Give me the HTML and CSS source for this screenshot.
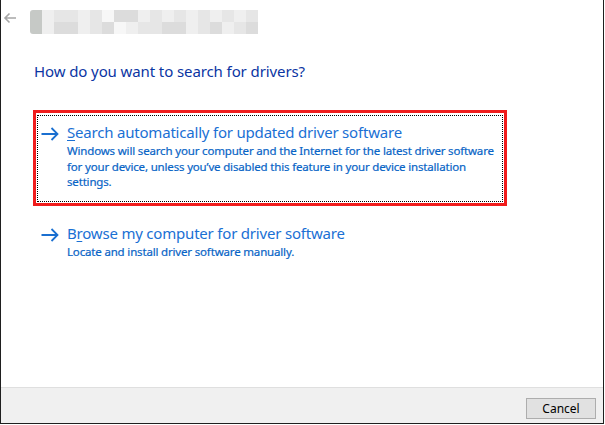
FILE: index.html
```html
<!DOCTYPE html>
<html>
<head>
<meta charset="UTF-8" />
<title>Update Drivers</title>
<link rel="stylesheet" href="styles.css">
</head>
<body>
<div class="wizard">
	<div class="topbar">
		<svg class="back" width="14" height="12" viewBox="0 0 14 12"><path d="M13 6H2M6.5 1.5L2 6l4.5 4.5" fill="none" stroke="#a6a6a6" stroke-width="1.6"/></svg>
		<div class="blur">
			<div class="row">
				<span class="px edge"></span><span class="px c3"></span><span class="px c2"></span><span class="px c2"></span><span class="px c3"></span><span class="px c2"></span><span class="px c4"></span><span class="px c1"></span><span class="px c1"></span><span class="px c3"></span><span class="px c2"></span><span class="px c3"></span><span class="px c2"></span><span class="px c3"></span><span class="px c2"></span><span class="px c3"></span><span class="px c2"></span><span class="px c3"></span><span class="px c2"></span>
			</div>
			<div class="row">
				<span class="px edge"></span><span class="px c3"></span><span class="px c1"></span><span class="px c1"></span><span class="px c3"></span><span class="px c2"></span><span class="px c1"></span><span class="px c4"></span><span class="px c3"></span><span class="px c2"></span><span class="px c2"></span><span class="px c1"></span><span class="px c1"></span><span class="px c3"></span><span class="px c2"></span><span class="px c1"></span><span class="px c3"></span><span class="px c2"></span><span class="px c1"></span>
			</div>
		</div>
	</div>
	<div class="content">
		<h1>How do you want to search for drivers?</h1>
		<div class="option selected">
			<div class="focus">
				<svg class="arrow" width="18" height="14" viewBox="0 0 18 14"><path d="M0.5 7H16.5M10.5 1L16.5 7L10.5 13" fill="none" stroke="#1a6fd0" stroke-width="1.8"/></svg>
				<div class="text">
					<div class="title"><u>S</u>earch automatically for updated driver software</div>
					<div class="desc">Windows will search your computer and the Internet for the latest driver software<br>for your device, unless you’ve disabled this feature in your device installation<br>settings.</div>
				</div>
			</div>
		</div>
		<div class="option">
			<div class="focus">
				<svg class="arrow" width="18" height="14" viewBox="0 0 18 14"><path d="M0.5 7H16.5M10.5 1L16.5 7L10.5 13" fill="none" stroke="#1a6fd0" stroke-width="1.8"/></svg>
				<div class="text">
					<div class="title">B<u>r</u>owse my computer for driver software</div>
					<div class="desc">Locate and install driver software manually.</div>
				</div>
			</div>
		</div>
	</div>
	<div class="footer">
		<button class="btn">Cancel</button>
	</div>
</div>
</body>
</html>
```

FILE: styles.css
```css
html,body{margin:0;padding:0;background:#fff;}
body{font-family:"Segoe UI","Noto Sans",sans-serif;}
.wizard{width:604px;height:424px;box-sizing:border-box;border:1px solid #1f1f1f;border-top:0;display:flex;flex-direction:column;background:#fff;}

.topbar{height:44px;display:flex;align-items:flex-start;}
.back{margin:12px 0 0 2px;}
.blur{margin:10px 0 0 13px;display:flex;flex-direction:column;}
.blur .row{display:flex;}
.px{display:block;width:12px;height:12px;}
.px.edge{width:12px;background:#c6c9c6;}
.row:first-child .px.edge{border-top-left-radius:3px;}
.row:last-child .px.edge{border-bottom-left-radius:3px;}
.px.c1{background:#dcdcdc;}
.px.c2{background:#e6e6e6;}
.px.c3{background:#efefef;}
.px.c4{background:#f7f7f7;}

.content{flex:1;padding:16px 0 0 32px;}
h1{margin:0 0 28px 1px;font-size:15px;letter-spacing:-0.1px;line-height:22px;font-weight:normal;color:#0b35a3;}

.option{width:474px;box-sizing:border-box;border:3px solid transparent;padding:2px 1px 1px 1px;}
.option + .option{margin-top:5px;}
.option.selected{border-color:#f01c1c;}
.focus{display:flex;align-items:flex-start;border:1px dotted transparent;padding:6px 3px 11px 3px;}
.selected .focus{border-color:#000;}
.arrow{flex:none;margin:5px 8px 0 0;}
.title{font-size:15px;letter-spacing:-0.2px;line-height:20px;color:#1a70d4;white-space:nowrap;}
.title u{text-underline-offset:2px;}
.desc{margin-top:1px;font-size:11.5px;letter-spacing:-0.17px;line-height:15.5px;color:#0864c6;white-space:nowrap;-webkit-text-stroke:0.2px #0864c6;}

.footer{height:36px;box-sizing:border-box;border-top:1px solid #dfdfdf;background:#f0f0f0;display:flex;justify-content:flex-end;align-items:flex-start;padding:10px 7px 0 0;}
.btn{width:70px;height:21px;box-sizing:border-box;border:1px solid #adadad;background:#e1e1e1;font-family:"Segoe UI","Noto Sans",sans-serif;font-size:12px;color:#000;padding:0;}
```
